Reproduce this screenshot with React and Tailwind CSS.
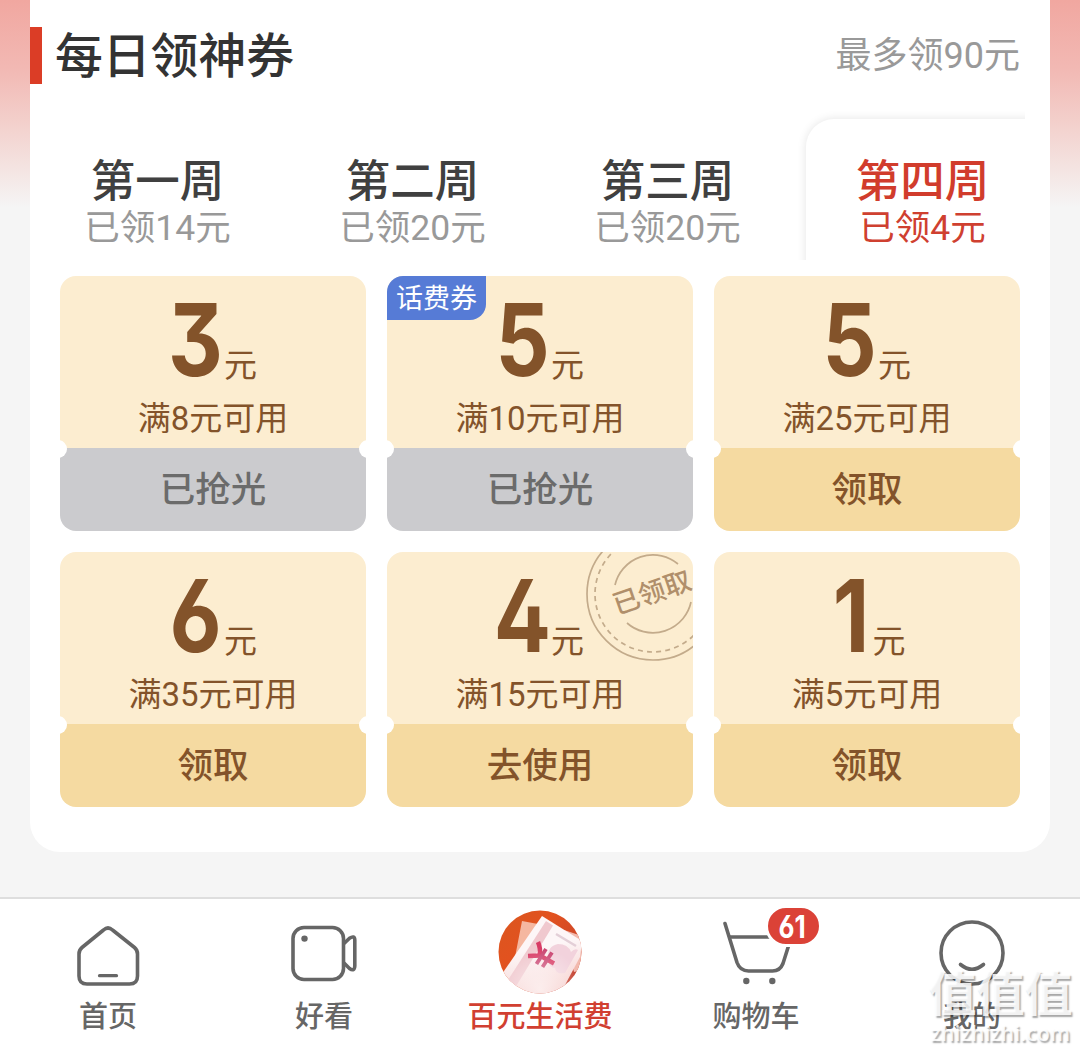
import React from "react";

const weeks = [
  { title: "第一周", got: "已领14元" },
  { title: "第二周", got: "已领20元" },
  { title: "第三周", got: "已领20元" },
  { title: "第四周", got: "已领4元", active: true },
];

const coupons = [
  { id: 1, amount: "3", rule: "满8元可用", action: "已抢光", soldOut: true },
  { id: 2, amount: "5", rule: "满10元可用", action: "已抢光", soldOut: true, tag: "话费券" },
  { id: 3, amount: "5", rule: "满25元可用", action: "领取" },
  { id: 4, amount: "6", rule: "满35元可用", action: "领取" },
  { id: 5, amount: "4", rule: "满15元可用", action: "去使用", received: true },
  { id: 6, amount: "1", rule: "满5元可用", action: "领取" },
];

const WeekTab = ({ week }) => (
  <div className="relative h-full">
    {week.active && (
      <div className="absolute left-0 top-0 w-[230px] h-[155px] overflow-hidden">
        <div className="absolute left-[11px] top-[14px] w-[260px] h-[200px] rounded-tl-[28px] bg-white shadow-[0_0_10px_rgba(0,0,0,0.11)]" />
      </div>
    )}
    <div
      className={`relative pt-[52px] text-center ${
        week.active ? "text-[#d13c2c]" : "text-[#404040]"
      }`}
    >
      <div className="text-[44.500px] leading-[50px] font-medium">{week.title}</div>
      <div
        className={`-mt-[1px] text-[35.500px] leading-[44px] ${
          week.active ? "text-[#cf4030]" : "text-[#999999]"
        }`}
      >
        {week.got}
      </div>
    </div>
  </div>
);

// Round "received" stamp, cut off by the coupon's edges
const Stamp = () => (
  <div className="absolute inset-0 overflow-hidden rounded-t-[16px] text-[#b08f6b]">
    <svg
      className="absolute left-[198px] top-[-26px]"
      width="136"
      height="136"
      viewBox="-68 -68 136 136"
      fill="none"
      stroke="#c3ab8b"
      strokeWidth="1.7"
    >
      <circle r="66" />
      <circle r="58" strokeDasharray="5 4.2" />
      <path d="M-38 -9A39 39 0 0 1 25 -30" />
      <path d="M-26 29A39 39 0 0 0 38 8" />
    </svg>
    <div className="absolute left-[224px] top-[22px] w-[82px] whitespace-nowrap text-center text-[27px] leading-[38px] font-medium -rotate-[19deg]">
      已领取
    </div>
  </div>
);

const Coupon = ({ coupon }) => (
  <div className="relative w-[306px] h-[255px] rounded-[16px] overflow-hidden">
    <div className="relative h-[172px] bg-[#fcedd0] text-[#83532a]">
      {coupon.received && <Stamp />}
      {coupon.tag && (
        <div className="absolute left-0 top-0 w-[99px] h-[44px] rounded-br-[16px] bg-[#567bd6] text-white text-[27px] leading-[46px] text-center">
          {coupon.tag}
        </div>
      )}
      <div className="h-[118px] flex items-end justify-center">
        <span
          className={`flex justify-center font-['Inter'] font-bold text-[101px] leading-[110px] scale-x-[0.84] [font-feature-settings:'ss01','cv09'] ${
            coupon.amount === "1" ? "w-[44px]" : "w-[55px] -translate-x-[1px]"
          }`}
        >
          {coupon.amount}
        </span>
        <span className="text-[33px] leading-[56px]">元</span>
      </div>
      <div className="text-[33px] leading-[49px] text-center">
        {coupon.rule}
      </div>
    </div>
    <div
      className={`h-[83px] text-center text-[35.500px] leading-[85px] font-medium ${
        coupon.soldOut
          ? "bg-[#cbcbce] text-[#6b6b6b]"
          : "bg-[#f5daa1] text-[#83532a]"
      }`}
    >
      {coupon.action}
    </div>
    {/* Side notches */}
    <div className="absolute -left-[11px] top-[164px] size-[18px] rounded-full bg-white" />
    <div className="absolute -right-[11px] top-[164px] size-[18px] rounded-full bg-white" />
  </div>
);

const HomeIcon = () => (
  <svg width="84" height="84" viewBox="0 0 84 84" fill="none" stroke="#666" strokeWidth="3.6" strokeLinecap="round" strokeLinejoin="round">
    <path d="M13 66Q13 74 21 74H63.500Q71.500 74 71.500 66V44Q71.500 40 68.500 37.500L46.500 20Q42 16 37.500 20L16 37.500Q13 40 13 44Z" />
    <path d="M33.500 65.700H50.500" strokeWidth="3.200" />
  </svg>
);

const VideoIcon = () => (
  <svg width="84" height="84" viewBox="0 0 84 84" fill="none" stroke="#666" strokeWidth="3.6" strokeLinejoin="round">
    <rect x="11" y="17.500" width="50.500" height="52" rx="11" />
    <circle cx="22.500" cy="28.600" r="3.200" fill="#666" stroke="none" />
    <path d="M62 33.500L67.500 28.200Q72.500 25 72.800 30V56Q72.500 62 67.500 58.500L62 53" />
  </svg>
);

const LifeIcon = () => (
  <svg width="84" height="84" viewBox="0 0 84 84">
    <defs>
      <linearGradient id="coin" x1="0" y1="0" x2="1" y2="1">
        <stop offset="0" stopColor="#d9571f" />
        <stop offset="0.35" stopColor="#e2521f" />
        <stop offset="1" stopColor="#b93b35" />
      </linearGradient>
      <linearGradient id="paper" x1="0.3" y1="0.2" x2="0.5" y2="1">
        <stop offset="0.3" stopColor="#fdf6f7" />
        <stop offset="1" stopColor="#f6cfcd" />
      </linearGradient>
      <radialGradient id="glow" cx="0.5" cy="0.95" r="0.5">
        <stop offset="0" stopColor="#fff" stopOpacity="0.6" />
        <stop offset="1" stopColor="#fff" stopOpacity="0" />
      </radialGradient>
      <clipPath id="round">
        <circle cx="42" cy="42" r="41.500" />
      </clipPath>
    </defs>
    <g clipPath="url(#round)">
      <rect width="84" height="84" fill="url(#coin)" />
      <path d="M24 11L40 14L14 62L18 42Z" fill="#f5b7a0" />
      <path d="M66 20L84 26V60L76 62Z" fill="#f2b9ad" />
      <path d="M44 6L84 31L82 47L67 75L55 84H0L6 61Z" fill="url(#paper)" />
      <path d="M48 11L55 15.500L17 78L8 73Z" fill="#f0c8ce" />
      <path d="M58 24L78 36" stroke="#e3cfd7" strokeWidth="2.500" />
      <path d="M50 49Q49 36 60 34Q70 34 73 42Q77 38 80 40L67 63Q58 65 57 58Q51 58 50 49Z" fill="#f2d2dc" />
      <g stroke="#d83b65" fill="none" strokeWidth="4.500">
        <path d="M40 32Q43 39 41.500 45.500L30 46" />
        <path d="M41 45L56 53.500" />
        <path d="M48 39L38.500 54M54 42.500L44.500 57" strokeWidth="3.800" stroke="#c94470" />
      </g>
      <rect width="84" height="84" fill="url(#glow)" />
    </g>
  </svg>
);

const CartIcon = () => (
  <svg width="84" height="84" viewBox="0 0 84 84" fill="none" stroke="#666" strokeWidth="3.6" strokeLinecap="round">
    <path d="M11 13.500L23 52.500Q26 61 34.500 61H58.500Q66 61 69 53.500L74.500 36" />
    <path d="M16 27H70" />
    <circle cx="32.300" cy="71" r="3.200" fill="#666" stroke="none" />
    <circle cx="58.300" cy="71" r="3.200" fill="#666" stroke="none" />
  </svg>
);

const MineIcon = () => (
  <svg width="84" height="84" viewBox="0 0 84 84" fill="none" stroke="#666" strokeWidth="3.6" strokeLinecap="round">
    <circle cx="42" cy="43" r="31" />
    <path d="M30.500 54.500Q42 64 53.500 54.500" />
  </svg>
);

const navItems = [
  { label: "首页", icon: HomeIcon },
  { label: "好看", icon: VideoIcon },
  { label: "百元生活费", icon: LifeIcon, active: true },
  { label: "购物车", icon: CartIcon, badge: "61" },
  { label: "我的", icon: MineIcon },
];

const BottomNav = () => (
  <nav className="relative h-[152px] bg-white border-t-2 border-[#dedede] grid grid-cols-5">
    {navItems.map(({ label, icon: Icon, active, badge }) => (
      <div key={label} className="flex flex-col items-center pt-[11px]">
        <div className="relative">
          <Icon />
          {badge && (
            <div className="absolute left-[51px] -top-[5px] w-[57px] h-[42px] rounded-full border-3 border-white bg-[#db4237] flex items-center justify-center text-white font-['Inter'] font-bold text-[31px] leading-none [font-feature-settings:'ss01']">
              <span className="inline-block scale-x-[0.84] -translate-x-[1px]">{badge}</span>
            </div>
          )}
        </div>
        <div
          className={`mt-[3px] text-[29px] leading-[40px] font-medium ${
            active ? "text-[#d13f31]" : "text-[#666]"
          }`}
        >
          {label}
        </div>
      </div>
    ))}
    {/* Watermark */}
    <div className="absolute right-[6px] bottom-[3px] w-[147px] text-center text-white/85 font-bold [text-shadow:1.5px_1.5px_1.5px_rgba(0,0,0,0.35)]">
      <div className="text-[48px] leading-[50px]">值值值</div>
      <div className="text-[21px] leading-[26px] font-['Open_Sans'] font-semibold tracking-[0.2px]">
        zhizhizhi.com
      </div>
    </div>
  </nav>
);

export default function App() {
  return (
    <div className="w-[1080px] h-[1049px] overflow-hidden bg-[#f5f5f5] font-['Roboto','Noto_Sans_CJK_SC',sans-serif]">
      <div className="h-[897px] px-[30px] bg-[linear-gradient(to_bottom,#f1a7a0_0px,#f2b9b4_70px,#f3d3cf_130px,#f5f5f5_208px)]">
        <section className="h-[852px] bg-white rounded-b-[30px]">
          <header className="h-[105px] pt-[27px] flex items-start">
            <div className="w-[12px] h-[57px] bg-[#db3d26]" />
            <h1 className="ml-[13px] text-[47.800px] leading-[61px] font-medium text-[#333]">
              每日领神券
            </h1>
            <span className="ml-auto mr-[30px] text-[36px] leading-[58px] text-[#999]">
              最多领90元
            </span>
          </header>
          <div className="h-[171px] grid grid-cols-4">
            {weeks.map((week) => (
              <WeekTab key={week.title} week={week} />
            ))}
          </div>
          <div className="px-[30px] grid grid-cols-3 gap-[21px]">
            {coupons.map((coupon) => (
              <Coupon key={coupon.id} coupon={coupon} />
            ))}
          </div>
        </section>
      </div>
      <BottomNav />
    </div>
  );
}
